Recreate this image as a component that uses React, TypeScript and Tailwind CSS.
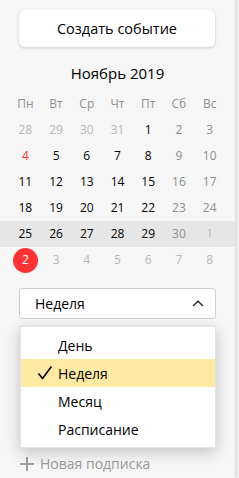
import React from "react";

type Day = { n: number; tone: "muted" | "normal" | "weekend" | "holiday" | "today" };

const weekdays = ["Пн", "Вт", "Ср", "Чт", "Пт", "Сб", "Вс"];

const rows: Day[][] = [
  [
    { n: 28, tone: "muted" },
    { n: 29, tone: "muted" },
    { n: 30, tone: "muted" },
    { n: 31, tone: "muted" },
    { n: 1, tone: "normal" },
    { n: 2, tone: "weekend" },
    { n: 3, tone: "weekend" },
  ],
  [
    { n: 4, tone: "holiday" },
    { n: 5, tone: "normal" },
    { n: 6, tone: "normal" },
    { n: 7, tone: "normal" },
    { n: 8, tone: "normal" },
    { n: 9, tone: "weekend" },
    { n: 10, tone: "weekend" },
  ],
  [
    { n: 11, tone: "normal" },
    { n: 12, tone: "normal" },
    { n: 13, tone: "normal" },
    { n: 14, tone: "normal" },
    { n: 15, tone: "normal" },
    { n: 16, tone: "weekend" },
    { n: 17, tone: "weekend" },
  ],
  [
    { n: 18, tone: "normal" },
    { n: 19, tone: "normal" },
    { n: 20, tone: "normal" },
    { n: 21, tone: "normal" },
    { n: 22, tone: "normal" },
    { n: 23, tone: "weekend" },
    { n: 24, tone: "weekend" },
  ],
  [
    { n: 25, tone: "normal" },
    { n: 26, tone: "normal" },
    { n: 27, tone: "normal" },
    { n: 28, tone: "normal" },
    { n: 29, tone: "normal" },
    { n: 30, tone: "weekend" },
    { n: 1, tone: "muted" },
  ],
  [
    { n: 2, tone: "today" },
    { n: 3, tone: "muted" },
    { n: 4, tone: "muted" },
    { n: 5, tone: "muted" },
    { n: 6, tone: "muted" },
    { n: 7, tone: "muted" },
    { n: 8, tone: "muted" },
  ],
];

const toneClass: Record<Day["tone"], string> = {
  muted: "text-[#b8b8b8]",
  normal: "text-black font-medium",
  weekend: "text-[#8f8f8f]",
  holiday: "text-[#ff3333]",
  today: "text-white font-medium",
};

const options = ["День", "Неделя", "Месяц", "Расписание"];

export default function App() {
  return (
    <div
      className="w-[239px] h-[478px] bg-[#f0f0f0] flex overflow-hidden"
      style={{ fontFamily: '"Open Sans", "Noto Sans", sans-serif' }}
    >
      <div className="w-[235px] h-full bg-[#f6f6f6] shadow-[1px_0_3px_rgba(0,0,0,0.12)] flex flex-col">
        {/* Create button */}
        <button className="mx-[19px] mt-[10px] h-[37px] w-[196px] bg-white rounded-[6px] shadow-[0_1px_3px_rgba(0,0,0,0.18)] text-[14.5px] text-black">
          Создать событие
        </button>

        {/* Month title */}
        <div className="mt-[16px] h-[20px] leading-[20px] text-center text-[15px] text-black">
          Ноябрь 2019
        </div>

        {/* Calendar */}
        <div className="mt-[8px]">
          <div className="grid grid-cols-7 px-[10px] h-[26px] items-center text-[12px] text-[#8f8f8f]">
            {weekdays.map((w) => (
              <div key={w} className="text-center">
                {w}
              </div>
            ))}
          </div>
          {rows.map((row, i) => (
            <div
              key={i}
              className={`grid grid-cols-7 px-[10px] h-[26px] items-center text-[12px] ${
                i === 4 ? "bg-[#e6e6e6]" : ""
              }`}
            >
              {row.map((d, j) => (
                <div key={j} className="flex justify-center">
                  {d.tone === "today" ? (
                    <span className="w-[25px] h-[25px] rounded-full bg-[#ff3333] flex items-center justify-center text-white font-medium">
                      {d.n}
                    </span>
                  ) : (
                    <span className={toneClass[d.tone]}>{d.n}</span>
                  )}
                </div>
              ))}
            </div>
          ))}
        </div>

        {/* View select */}
        <div className="relative mx-[19px] mt-[15px]">
          <div className="h-[31px] bg-white border border-[#cfcfcf] rounded-[3px] flex items-center justify-between pl-[15px] pr-[11px] text-[14px] text-black">
            <span>Неделя</span>
            <svg width="12" height="7" viewBox="0 0 12 7" fill="none">
              <path d="M1 6L6 1.2L11 6" stroke="#222" strokeWidth="1.3" />
            </svg>
          </div>

          <div className="absolute left-[1px] right-0 top-[38px] z-10 bg-white py-[4px] shadow-[0_4px_14px_rgba(0,0,0,0.22)] border border-[#e2e2e2]">
            {options.map((o) => (
              <div
                key={o}
                className={`h-[28px] flex items-center text-[14px] text-black ${
                  o === "Неделя" ? "bg-[#feeaa2]" : ""
                }`}
              >
                <span className="w-[37px] flex justify-end pr-[5px]">
                  {o === "Неделя" && (
                    <svg width="16" height="16" viewBox="0 0 16 16" fill="none">
                      <path d="M1.5 8.5L5.5 13.5L14.5 1.5" stroke="#000" strokeWidth="1.6" />
                    </svg>
                  )}
                </span>
                <span>{o}</span>
              </div>
            ))}
          </div>
        </div>

        {/* New subscription */}
        <div className="mx-[20px] mt-[134px] flex items-center gap-[6px] text-[14px] text-[#999999]">
          <svg width="14" height="14" viewBox="0 0 14 14">
            <path d="M7 0V14M0 7H14" stroke="#a0a0a0" strokeWidth="2" />
          </svg>
          <span>Новая подписка</span>
        </div>
      </div>
    </div>
  );
}
